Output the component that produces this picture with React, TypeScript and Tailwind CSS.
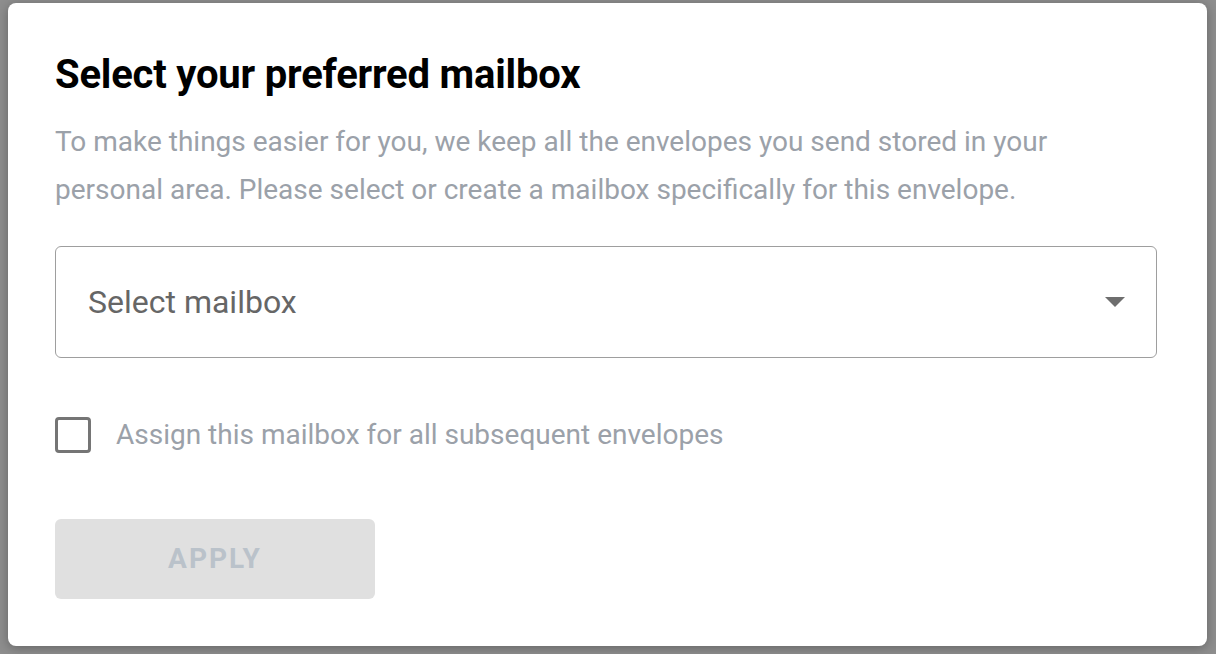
export default function App() {
  return (
    <div className="w-[1216px] h-[654px] bg-[#8e8e8e] pl-[8px] pt-[3px] overflow-hidden" style={{ fontFamily: "Roboto, 'Liberation Sans', sans-serif" }}>
      <div className="w-[1199px] h-[643px] bg-white rounded-[8px] pl-[47px] pr-[50px] pt-[48px] shadow-[0_2px_12px_rgba(0,0,0,0.3)]">
        <h1 className="text-[40px] leading-[48px] font-bold text-black tracking-[-0.2px]">Select your preferred mailbox</h1>
        <p className="mt-[19px] max-w-[1060px] text-[28px] leading-[48px] text-[#9ba1a9]">
          To make things easier for you, we keep all the envelopes you send stored in your personal area. Please select or create a mailbox specifically for this envelope.
        </p>
        <div className="mt-[32px] h-[112px] border-[1.5px] border-[#9e9e9e] rounded-[6px] flex items-center justify-between pl-[32px] pr-[31px]">
          <span className="text-[32px] text-[#666666]">Select mailbox</span>
          <svg width="20" height="10" viewBox="0 0 20 10"><path d="M0 0 L20 0 L10 10 Z" fill="#6e6e6e" /></svg>
        </div>
        <div className="mt-[59px] flex items-center gap-[25px] h-[36px]">
          <div className="w-[36px] h-[36px] border-[3px] border-[#757575] rounded-[4px]" />
          <span className="text-[28px] text-[#9ba1a9]">Assign this mailbox for all subsequent envelopes</span>
        </div>
        <button className="mt-[66px] w-[320px] h-[80px] bg-[#e0e0e0] rounded-[6px] text-[28px] font-bold tracking-[2px] text-[#bac2ca]">APPLY</button>
      </div>
    </div>
  );
}
